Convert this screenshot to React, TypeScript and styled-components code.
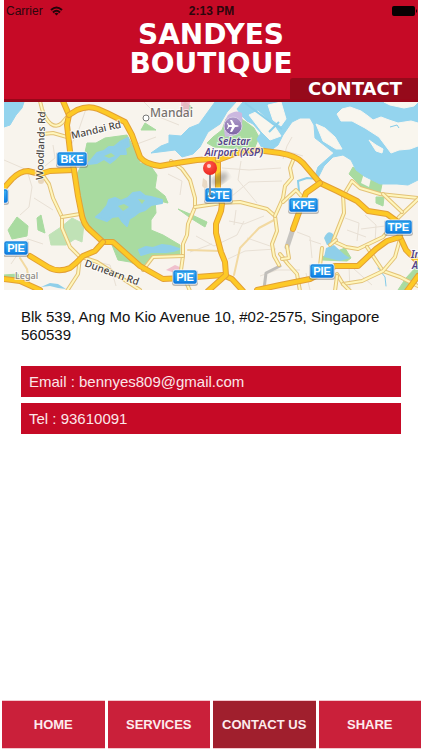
import React from "react";
import styled, { createGlobalStyle } from "styled-components";

const GlobalStyle = createGlobalStyle`
  * { box-sizing: border-box; }
  body { margin: 0; background: #fff; font-family: "Liberation Sans", Arial, sans-serif; }
`;

const Page = styled.div`
  display: flex;
  flex-direction: column;
  min-height: 100vh;
`;

const Header = styled.header`
  display: flex;
  flex-direction: column;
  margin: 0 4px;
  background: #c60a26;
  border-bottom: 3px solid #980719;
`;

const StatusBar = styled.div`
  display: grid;
  grid-template-columns: 1fr auto 1fr;
  align-items: center;
  height: 20px;
  padding: 2px 1px 0 2px;
  font-size: 12px;
  line-height: 16px;
  color: #2c060c;
`;

const Carrier = styled.span`
  display: flex;
  align-items: center;
  gap: 7px;
`;

const Clock = styled.time`
  font-weight: bold;
`;

const Battery = styled.svg`
  justify-self: end;
`;

const Title = styled.h1`
  align-self: center;
  width: 200px;
  margin: 0;
  color: #fff;
  font: bold 28px/29px "DejaVu Sans", sans-serif;
  text-align: center;
`;

const SectionTab = styled.h2`
  align-self: flex-end;
  margin: 0;
  padding: 1px 16px 0 18px;
  border-top-left-radius: 3px;
  background: #960a1b;
  color: #fff;
  font: bold 18px/20px "DejaVu Sans", sans-serif;
`;

const Map = styled.svg`
  display: block;
  width: calc(100% - 8px);
  height: 188px;
  margin: 0 4px;
  background: #f8f4ed;
`;

const Details = styled.main`
  flex: 1;
  padding: 18px 21px;
`;

const Address = styled.address`
  margin-bottom: 22px;
  color: #111;
  font-size: 15px;
  font-style: normal;
  line-height: 18px;
`;

const ContactLinks = styled.div`
  display: flex;
  flex-direction: column;
  gap: 6px;
`;

const ContactLink = styled.a`
  padding: 0 8px;
  background: #c60a26;
  color: #fce6e9;
  font-size: 15px;
  line-height: 31px;
  text-decoration: none;
`;

const Nav = styled.nav`
  display: grid;
  grid-template-columns: repeat(4, 1fr);
  gap: 3px;
  padding: 0 1px 1px 2px;
`;

const NavButton = styled.button<{ $active?: boolean }>`
  height: 49px;
  padding: 0;
  border: 1px solid #f3c9cf;
  border-width: 1px 0;
  background: ${(p) => (p.$active ? "#a01f2d" : "#ca203a")};
  color: #fdebed;
  font: bold 13px/18px "Liberation Sans", Arial, sans-serif;
  white-space: nowrap;
`;

const Streets = styled.g`
  fill: none;
  stroke: #e8e0d5;
  stroke-width: 1;
`;

const RoadLine = styled.path<{ $color: string; $width: number }>`
  fill: none;
  stroke: ${(p) => p.$color};
  stroke-width: ${(p) => p.$width};
  stroke-linecap: round;
  stroke-linejoin: round;
`;

const PlaceLabel = styled.text<{ $color?: string; $size?: number }>`
  fill: ${(p) => p.$color || "#4a4642"};
  font: 500 ${(p) => p.$size || 10}px "Noto Sans", sans-serif;
  paint-order: stroke;
  stroke: rgba(255, 255, 255, 0.7);
  stroke-width: 2px;
`;

const AirportLabel = styled(PlaceLabel)<{ $start?: boolean }>`
  font-style: italic;
  font-weight: 600;
  text-anchor: ${(p) => (p.$start ? "start" : "middle")};
`;

const SignText = styled.text`
  fill: #fff;
  font: bold 11px "Liberation Sans", Arial, sans-serif;
  text-anchor: middle;
`;

const minorRoads = [
  "M40 101 L42 109 Q45 119 51 124 Q57 128 62 123 L67 117",
  "M43 134 L53 133 L67 137",
  "M42 174 L49 184 L53 198 L62 217 L62 228 L70 247 L80 257 L78 274 L67 291",
  "M62 217 L80 214",
  "M82 257 L97 262 L140 290",
  "M171 161 L182 169 L190 180 L195 198 L195 207 L188 224 L187 235 L183 244 L183 256 L181 270 L190 291",
  "M183 256 L153 257 L143 270",
  "M195 207 L222 203 L240 202 L267 209 L275 216 L277 231 L272 244 L274 256 L279 265",
  "M275 216 L283 198 L285 186 L292 178 L290 168 L294 158",
  "M303 198 L296 190 L283 202",
  "M343 196 L352 181 L360 188 L380 194 L418 198",
  "M343 194 L344 213 L333 241 L346 247 L358 249 L383 237 L399 217 L418 199",
  "M383 194 L402 212",
  "M330 245 L336 240",
  "M367 247 L383 271 L400 277 L418 286",
  "M400 239 L395 257 L383 271 L362 281 L343 284 L337 274",
  "M322 248 L320 266",
  "M280 254 L288 264 L297 274 L300 291",
  "M287 246 L289 258 L282 259",
  "M337 276 L335 291",
  "M343 284 L350 291",
];

const highways = [
  "M4 188 L12 179 Q20 171 28 171 L40 174 L50 171 L74 170",
  "M63 101 L69 115 L67 125 L70 151 L74 170 L78 196 L81 211 Q83 225 91 231 L103 242 L113 242 L140 266 L163 279 L183 278 L223 275 L232 279 L243 291",
  "M69 115 L77 110 Q88 105 98 109 L107 113 L125 122 L132 135 L140 157 Q145 164 160 166 L177 163 L197 160 L213 159 L218 162 L218 191 L222 204 L221 211 L216 224 L216 233 L221 252 L225 262 L226 275 L208 291",
  "M218 160 L237 153 L257 150 L280 153 Q297 156 303 163 L320 183 L337 191 L357 201 L368 211 L387 214 L398 222 L400 237 L406 250 L418 262",
  "M320 183 L306 193 L293 229",
  "M400 237 L387 241 L376 249 L358 266 L335 266 L310 279 L280 285 L257 290",
  "M30 256 L48 267 Q58 273 70 268 L76 263 L83 256 L95 251 L103 242",
  "M4 279 L20 281 L40 290",
  "M418 276 L407 291",
];

function Road({ d, major }: { d: string; major?: boolean }) {
  return (
    <>
      <RoadLine d={d} $color={major ? "#e3a034" : "#e3c278"} $width={major ? 6 : 4} />
      <RoadLine d={d} $color={major ? "#fdc926" : "#fff6bc"} $width={major ? 4 : 2} />
    </>
  );
}

function Sign({ x, y, w, label }: { x: number; y: number; w: number; label?: string }) {
  return (
    <g>
      <rect x={x - 1} y={y} width={w + 2} height={16} rx={3} fill="#6d6d6d" opacity={0.45} />
      <rect x={x} y={y} width={w} height={14} rx={2} fill="url(#signBlue)" stroke="#f3f8fc" />
      <rect x={x + 1} y={y + 1} width={w - 2} height={12} rx={1} fill="none" stroke="#1374d4" />
      {label && <SignText x={x + w / 2} y={y + 11}>{label}</SignText>}
    </g>
  );
}

function LocationMap() {
  return (
    <Map viewBox="4 102 414 188" preserveAspectRatio="xMidYMid slice" role="img" aria-label="Map of the boutique's location">
      <defs>
        <linearGradient id="signBlue" x1="0" y1="0" x2="0" y2="1">
          <stop offset="0" stopColor="#43b6f3" />
          <stop offset="1" stopColor="#087de4" />
        </linearGradient>
        <radialGradient id="pinRed" cx="0.4" cy="0.3" r="0.8">
          <stop offset="0" stopColor="#ff5a4b" />
          <stop offset="1" stopColor="#e81f1b" />
        </radialGradient>
        <linearGradient id="airportPurple" x1="0" y1="0" x2="0" y2="1">
          <stop offset="0" stopColor="#ad9bc9" />
          <stop offset="1" stopColor="#7e64a5" />
        </linearGradient>
        <filter id="soft"><feGaussianBlur stdDeviation="2" /></filter>
      </defs>

      <rect x="4" y="102" width="414" height="188" fill="#f8f4ed" />

      <g fill="#a9dba0" stroke="#a9dba0" strokeLinejoin="round">
        <path d="M77 174 L83 162 L87 143 L96 143 L105 138 L127 135 L135 150 L140 163 L150 165 L157 175 L155 188 L165 196 L168 203 L155 200 L156 213 L151 220 L151 230 L163 235 L180 245 L180 254 L165 256 L151 258 L143 268 L130 262 L118 260 L112 245 L103 240 L91 230 L84 215 L79 194 Z" />
        <path d="M141 130 L145 123 L156 130 Z" />
        <path d="M207 143 L213 137 L222 130 L226 119 L240 118 L246 122 L254 128 L259 137 L255 147 L244 149 L228 148 L214 147 Z" />
        <path d="M8 230 L17 217 L28 226 L27 236 L12 239 Z" />
        <path d="M37 218 L41 215 L45 233 L38 230 Z" />
        <path d="M49 235 L61 227 L72 218 L84 224 L82 242 L75 239 L66 245 L51 245 Z" opacity=".7" />
        <path d="M178 209 L190 214 L207 222 L205 227 L192 219 Z" />
        <path d="M349 174 L353 167 L366 175 L382 184 L380 194 L366 191 Z" />
        <path d="M4 275 L18 274 L20 282 L4 281 Z" />
        <path d="M376 197 L384 197 L383 206 L376 203 Z" />
        <path d="M398 290 L406 278 L418 265 L418 280 L410 290 Z" />
        <path d="M322 257 L345 248 L351 258 L347 261 L322 260 Z" />
        <path d="M185 102 L193 108 L187 112 L181 108 Z" />
        <path d="M254 107 L264 108 L266 116 L257 111 Z" />
      </g>
      <path d="M364 173 L371 178 L369 187 L361 183 Z" fill="#f8f4ed" />

      <g fill="#efb6c7" opacity=".85">
        <path d="M181 102 L190 102 L188 116 L181 112 Z" />
        <path d="M166 270 L175 265 L182 268 L175 273 Z" />
      </g>

      <g fill="#94d4ee" stroke="#94d4ee" strokeLinejoin="round">
        <path d="M4 102 L24 102 L22 108 L16 115 L10 125 L4 127 Z" />
        <path d="M215 102 L236 102 L227 112 L220 124 L208 132 L200 147 L193 154 L182 157 L175 150 L151 153 L161 146 L169 143 L169 135 L181 136 L189 128 L199 124 Z" />
        <path d="M243 102 L418 102 L418 180 L408 185 L397 184 L380 184 L364 176 L356 170 L351 160 L343 155 L333 157 L324 166 L318 178 L314 179 L318 167 L327 159 L334 153 L324 145 L315 138 L314 125 L310 118 L300 118 L292 122 L283 135 L278 145 L270 151 L262 148 L257 139 L261 133 L253 124 L247 121 L242 116 L237 109 Z" />
      </g>

      <g fill="#8fcfe9" stroke="#8fcfe9" strokeWidth="2" strokeLinejoin="round">
        <path d="M88 164 L93 158 L97 153 L104 151 L109 147 L114 147 L120 142 L128 138 L129 146 L125 148 L126 154 L120 154 L114 160 L110 163 L104 159 L97 163 Z" />
        <path d="M96 217 L101 213 L107 206 L109 200 L115 198 L121 201 L128 198 L133 193 L140 192 L145 196 L151 197 L162 200 L162 203 L151 205 L145 210 L139 212 L134 216 L129 219 L127 226 L122 221 L119 216 L112 217 L107 221 Z" />
        <path d="M139 250 L146 247 L153 248 L162 245 L170 246 L179 249 L173 251 L166 252 L151 252 L141 255 Z" />
      </g>
      <g fill="#a9dba0">
        <path d="M104 156 L111 153 L115 156 L109 158 Z" />
        <path d="M118 206 L124 204 L129 207 L123 211 Z" />
        <path d="M138 199 L145 200 L142 204 Z" />
      </g>

      <g fill="#8fcfe9">
        <path d="M324 238 Q328 229 333 234 L334 244 L327 245 Z" />
        <path d="M326 248 L334 245 L345 255 L350 258 L340 261 L324 257 Z" />
        <path d="M41 287 L50 283 L58 284 L66 289 L58 288 L50 286 Z" />
      </g>

      <g fill="#f9f6ee" stroke="#f9f6ee" strokeLinejoin="round">
        <path d="M337 114 L342 109 L350 107 L361 111 L368 116 L373 120 L381 117 L389 120 L398 123 L411 121 L418 123 L418 146 L410 149 L399 150 L391 153 L388 149 L379 137 L365 128 L352 121 L341 121 Z" />
        <path d="M384 102 L418 102 L414 106 L404 108 L390 105 Z" />
        <path d="M316 124 L325 128 L335 137 L342 149 L336 149 L323 141 Z" />
        <path d="M369 140 L376 145 L383 149 L382 153 L376 151 Z" />
        <path d="M268 105 L281 102 L286 119 L281 126 L273 120 Z" />
        <path d="M249 115 L258 111 L275 127 L281 136 L270 140 L262 132 Z" />
      </g>
      <path d="M245 103 L273 124 L282 129 M269 132 L279 122 M299 191 L298 181 L307 178 L318 179" fill="none" stroke="#8bcfea" strokeWidth="2" />
      <path d="M390 127 L397 125 L399 128" fill="none" stroke="#83cbe9" />

      <Streets>
        <path d="M4 160 L27 170 L32 187 L29 207 L20 215 M34 198 L53 210 M53 145 L55 158 L45 166 M87 106 L78 132 L71 145" />
        <path d="M144 102 L159 117 L179 125 M137 144 L156 137 M168 174 L182 181 L180 195 M222 168 L249 170 L281 168 M232 196 L249 182 L282 181 M241 161 L238 180 L257 203" />
        <path d="M196 236 L214 246 L237 235 L244 221 M229 221 L244 224 L264 216 M228 259 L245 251 L276 249 M190 252 L212 244 M236 210 L234 225 M247 238 L270 246" />
        <path d="M345 218 L359 223 L357 241 M365 215 L376 225 L375 243 M361 229 L385 226 M347 230 L366 237 M354 269 L372 285 M349 266 L350 290 M306 273 L310 290 M283 159 L287 146 L292 137 M286 151 L303 156" />
        <path d="M297 232 L310 237 L312 258 M309 240 L321 244 M260 276 L277 270 L300 270 M11 264 L28 239 L43 244 M88 260 L110 265 L116 286" />
      </Streets>
      <RoadLine d="M234 275 L240 248 L259 228 L276 219 M188 250 L220 251 M20 258 L27 269 L29 282" $color="#f2d9a1" $width={2} />
      <RoadLine d="M293 229 L287 247" $color="#c6c4c0" $width={5} />
      <RoadLine d="M264 289 L266 273 L280 266" $color="#c0beba" $width={3} />
      <RoadLine d="M378 268 L385 277 L386 286" $color="#83cbe9" $width={1} />

      {minorRoads.map((d) => <Road key={d} d={d} />)}
      {highways.map((d) => <Road key={d} d={d} major />)}

      <path d="M202 186 L203 178 L207 181 L208 192 Z" fill="#e9dac5" />
      <circle cx="41" cy="181" r="3" fill="#dfc9a8" opacity=".7" />

      <path d="M225 137 Q222 123 228 115 Q236 109 242 113 Q244 127 237 135 Z" fill="#cbb8df" />
      <circle cx="233" cy="126" r="9" fill="url(#airportPurple)" stroke="#d8cce6" />
      <path transform="translate(233 126) rotate(90)" d="M0 -6 Q1 -5 1 -2 L6 1 V3 L1 1 L1 4 L3 5 V6 L0 5 L-3 6 V5 L-1 4 V1 L-6 3 V1 L-1 -2 Q-1 -5 0 -6 Z" fill="#fff" />
      <AirportLabel x={234} y={145} $color="#54428a">Seletar</AirportLabel>
      <AirportLabel x={234} y={156} $color="#54428a">Airport (XSP)</AirportLabel>
      <circle cx="146" cy="118" r="3" fill="#fff" stroke="#777" />
      <PlaceLabel x={150} y={117} $size={12} $color="#77716d">Mandai</PlaceLabel>
      <PlaceLabel transform="translate(43 180) rotate(-88)">Woodlands Rd</PlaceLabel>
      <PlaceLabel transform="translate(72 139) rotate(-13)">Mandai Rd</PlaceLabel>
      <PlaceLabel transform="translate(84 266) rotate(20)">Dunearn Rd</PlaceLabel>
      <PlaceLabel x={15} y={279} $size={9} $color="#8a8580">Legal</PlaceLabel>
      <AirportLabel $start x={411} y={258} $color="#54428a">In</AirportLabel>
      <AirportLabel $start x={412} y={269} $color="#54428a">A</AirportLabel>

      <Sign x={-20} y={189} w={28} />
      <Sign x={57} y={152} w={30} label="BKE" />
      <Sign x={205} y={188} w={27} label="CTE" />
      <Sign x={289} y={198} w={29} label="KPE" />
      <Sign x={385} y={220} w={27} label="TPE" />
      <Sign x={4} y={241} w={24} label="PIE" />
      <Sign x={173} y={270} w={24} label="PIE" />
      <Sign x={310} y={264} w={24} label="PIE" />

      <ellipse cx="220" cy="179" rx="9" ry="5" fill="#444" opacity=".35" filter="url(#soft)" transform="rotate(-35 220 179)" />
      <path d="M210 174 V195" stroke="#8f9396" strokeWidth="2" />
      <ellipse cx="210" cy="196" rx="3" ry="1" fill="#555" opacity=".5" />
      <circle cx="210" cy="168" r="7" fill="url(#pinRed)" />
      <circle cx="209" cy="166" r="2" fill="#ffd4d0" />
    </Map>
  );
}

const tabs = ["HOME", "SERVICES", "CONTACT US", "SHARE"];

export default function App() {
  return (
    <Page>
      <GlobalStyle />
      <Header>
        <StatusBar>
          <Carrier>
            Carrier
            <svg width="13" height="10" viewBox="0 0 13 10" fill="none" stroke="#24050a" strokeWidth="2" aria-label="Wi-Fi">
              <path d="M1 4 Q6.500 -1 12 4 M3 6.500 Q6.500 3 10 6.500" />
              <path d="M4.500 7.500 Q6.500 6 8.500 7.500 L6.500 9.500 Z" fill="#24050a" stroke="none" />
            </svg>
          </Carrier>
          <Clock>2:13 PM</Clock>
          <Battery width="25" height="10" viewBox="0 0 25 10" aria-label="Battery full">
            <rect width="23" height="10" rx="2" fill="#080102" />
            <path d="M24 3 Q26 5 24 7 Z" fill="#080102" />
          </Battery>
        </StatusBar>
        <Title>SANDYES BOUTIQUE</Title>
        <SectionTab>CONTACT</SectionTab>
      </Header>
      <LocationMap />
      <Details>
        <Address>Blk 539, Ang Mo Kio Avenue 10, #02-2575, Singapore 560539</Address>
        <ContactLinks>
          <ContactLink href="mailto:bennyes809@gmail.com">Email : bennyes809@gmail.com</ContactLink>
          <ContactLink href="tel:93610091">Tel : 93610091</ContactLink>
        </ContactLinks>
      </Details>
      <Nav>
        {tabs.map((tab) => (
          <NavButton key={tab} type="button" $active={tab === "CONTACT US"}>{tab}</NavButton>
        ))}
      </Nav>
    </Page>
  );
}
